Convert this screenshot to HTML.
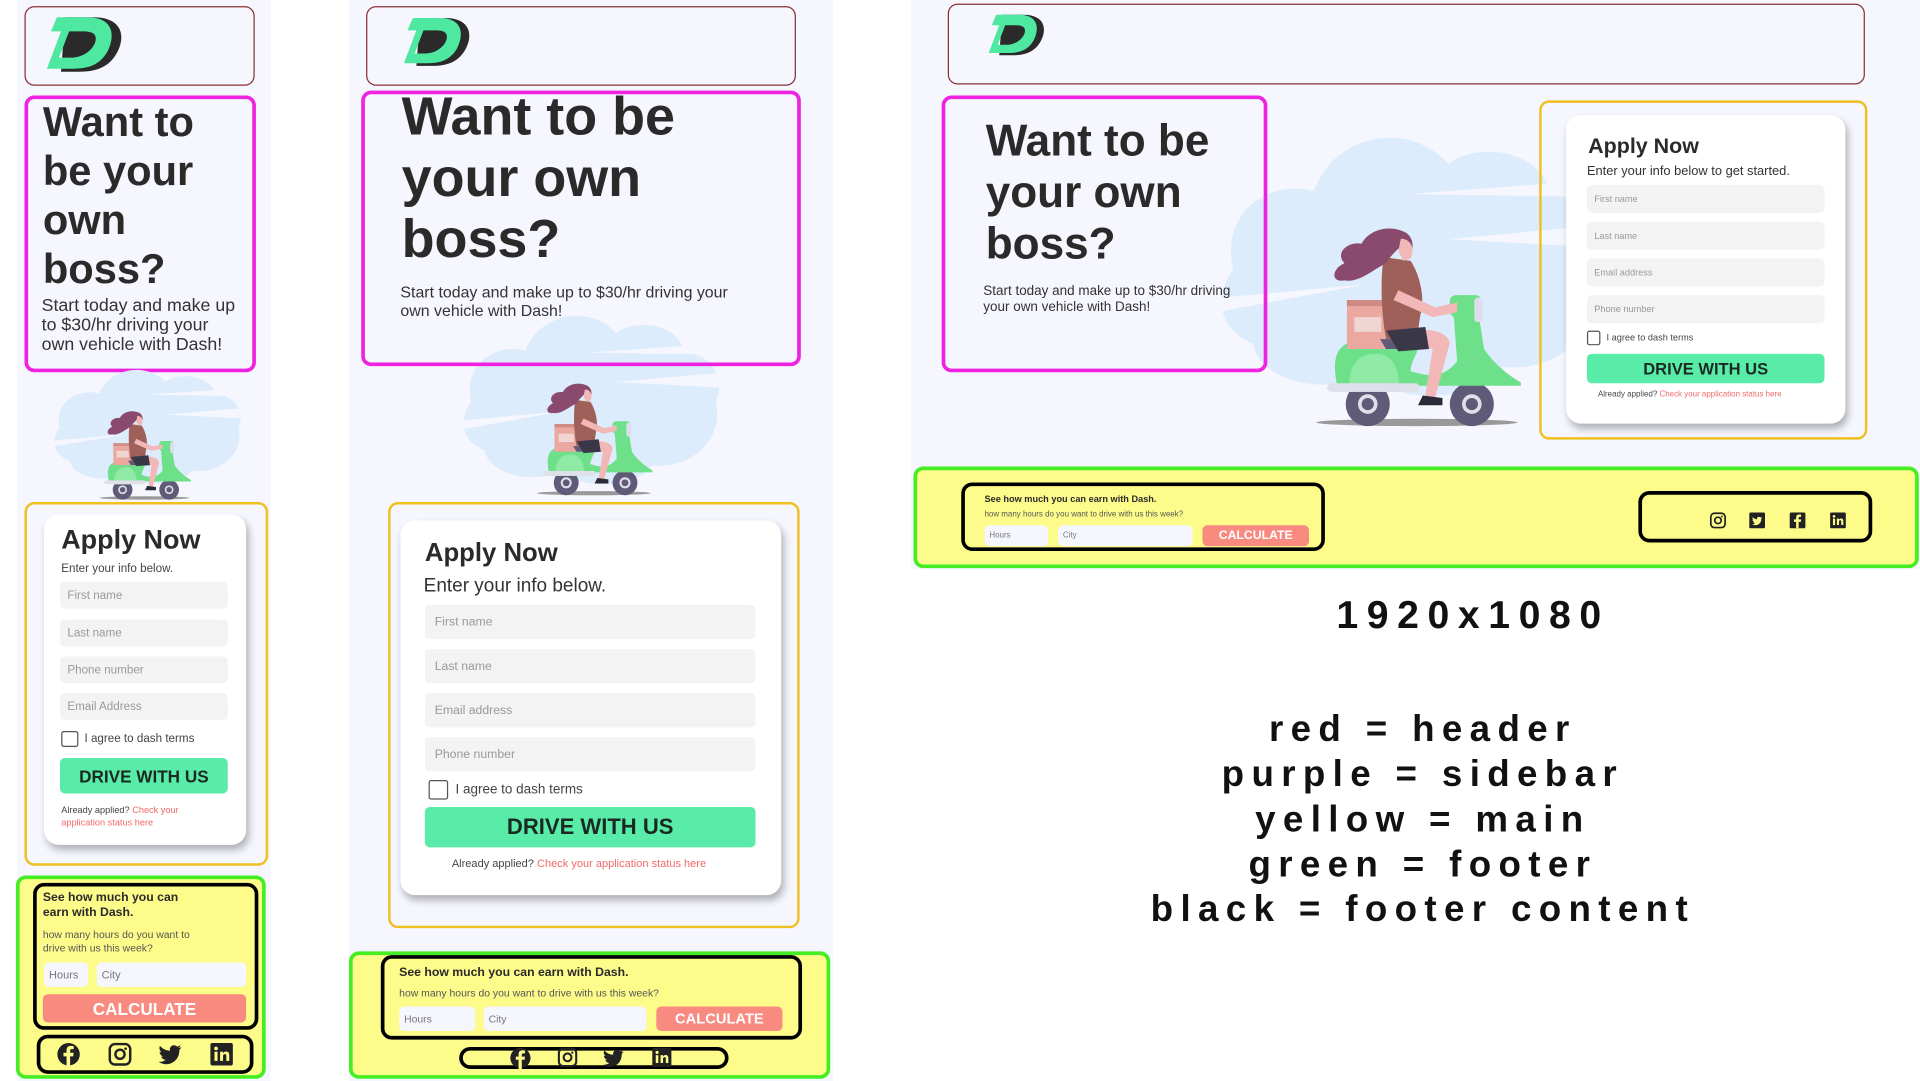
<!DOCTYPE html>
<html><head><meta charset="utf-8"><style>
*{margin:0;padding:0;box-sizing:border-box}
html,body{width:1920px;height:1080px;overflow:hidden;background:#fff;font-family:"Liberation Sans",sans-serif;color:#2a2a2a}
#w{position:absolute;left:0;top:0;width:1568px;height:883px;transform:scale(1.22449);transform-origin:0 0}
.a{position:absolute}
.bg{background:#f5f6fe}
.hd{border:1px solid #8b2f35;border-radius:8px}
.sb{border:3px solid #ee22e0;border-radius:8px}
.mn{border:2px solid #eec020;border-radius:8px}
.ft{border:3px solid #44ee22;border-radius:8px;background:#fdfb8a}
.fc{border:3px solid #000;border-radius:9px}
.card{background:#fff;border-radius:12px;box-shadow:2px 4px 6px rgba(0,0,0,.28)}
.in{position:absolute;background:#f3f3f3;border-radius:4px;color:#999;padding-left:6px;display:flex;align-items:center}
.btn{position:absolute;background:#58eca8;border-radius:4px;display:flex;align-items:center;justify-content:center;font-weight:bold;color:#1a2a22}
.h{font-weight:bold;color:#2a2a2a}
.red{color:#f06a6a}
.cb{position:absolute;border:1.5px solid #555;border-radius:2px;background:#fff}
.fi{position:absolute;background:#f5f6fe;border-radius:4px;color:#777;display:flex;align-items:center;padding-left:4px}
.calc{position:absolute;background:#f98a80;border-radius:4px;color:#fff;font-weight:bold;display:flex;align-items:center;justify-content:center}
.lg{position:absolute;left:0;width:2324px;text-align:center;font-weight:bold;color:#111;letter-spacing:6px;font-size:30px}
</style></head><body>
<svg width="0" height="0" style="position:absolute">
<defs>
<symbol id="logo" viewBox="0 0 80 56">
<path d="M22 2 H50 C78 2 82 20 74 36 C66 52 52 56 36 56 H18 Z" fill="#2a2a2a"/>
<path d="M14 2 H44 C70 2 72 20 64 36 C56 50 44 53 30 53 H4 L18 16 H8 Z M26 16 L16 42 H28 C40 42 50 34 52 26 C54 18 48 16 40 16 Z" fill="#4fe8a0" fill-rule="evenodd"/>
</symbol>
<symbol id="cloud" viewBox="0 0 300 200">
<path d="M20 110 C10 70 50 50 80 58 C95 20 150 10 180 40 C200 25 250 30 255 60 C290 62 300 90 290 110 C300 150 260 180 220 175 C200 200 140 200 120 180 C90 195 40 185 35 160 C10 150 5 130 20 110Z" fill="#dcecfc"/>
<path d="M150 60 L300 50 L300 62 Z M0 130 L120 120 L0 140 Z M180 90 L300 80 L300 96Z" fill="#f5f6fe"/>
</symbol>
<symbol id="scoot" viewBox="0 0 170 165">
<ellipse cx="85" cy="160" rx="82" ry="3" fill="#999"/>
<circle cx="45" cy="145" r="18" fill="#5e5a78"/><circle cx="45" cy="145" r="8" fill="#e0e0ea"/><circle cx="45" cy="145" r="5" fill="#5e5a78"/>
<circle cx="130" cy="145" r="18" fill="#5e5a78"/><circle cx="130" cy="145" r="8" fill="#e0e0ea"/><circle cx="130" cy="145" r="5" fill="#5e5a78"/>
<path d="M20 130 C15 105 20 95 40 92 L85 92 C90 100 80 108 80 118 C100 125 110 120 118 110 L115 70 L135 68 L140 100 C150 115 165 125 175 130 Z" fill="#6ee08a"/>
<path d="M30 135 C28 110 40 104 52 104 C65 104 72 116 70 135Z" fill="#8eeaa4"/>
<rect x="12" y="128" width="75" height="7" rx="3" fill="#e0e0ea"/>
<rect x="112" y="56" width="26" height="18" rx="5" fill="#6ee08a"/>
<rect x="132" y="58" width="7" height="20" rx="3" fill="#dde"/>
<path d="M28 60 h38 v40 h-38z" fill="#eaa8a0"/><path d="M28 60 h38 v5 h-38z" fill="#d08a85"/>
<rect x="34" y="74" width="22" height="12" fill="#f0d6d2"/>
<path d="M55 92 L95 92 L95 100 L60 100 Z" fill="#5e5a78"/>
<path d="M70 90 C90 80 110 85 112 95 L100 140 L92 138 L98 100 C90 98 80 100 72 100Z" fill="#f2b8b8"/>
<path d="M90 138 L106 140 L106 146 L86 146Z" fill="#2a2a38"/>
<path d="M58 25 C55 45 56 70 60 92 L85 92 L88 72 C92 60 88 40 80 28 Z" fill="#a0605a"/>
<path d="M70 52 L100 66 L118 62 L118 70 L98 74 L66 60Z" fill="#f2b8b8"/>
<path d="M60 85 L92 82 L95 100 L70 102Z" fill="#3a3848"/>
<path d="M74 4 C60 -2 45 4 40 14 C28 12 18 22 26 30 C16 34 14 46 26 44 C38 46 48 36 60 30 C62 26 66 22 70 18 L80 22 C84 14 80 6 74 4Z" fill="#8a4a6e"/>
<path d="M72 10 C80 10 84 18 80 26 L74 28 L70 20Z" fill="#f2b8b8"/>
</symbol>
<symbol id="fb" viewBox="0 0 24 24"><circle cx="12" cy="12" r="11" fill="#222"/><path d="M13.5 24 V14 H16.5 L17 10.5 H13.5 V8.5 C13.5 7.5 14 7 15 7 H17 V4 C16 3.9 15 3.8 14 3.8 C11.5 3.8 10 5.3 10 8 V10.5 H7 V14 H10 V24Z" fill="#fdfb8a"/></symbol>
<symbol id="ig" viewBox="0 0 24 24"><rect x="2" y="2" width="20" height="20" rx="5" fill="none" stroke="#222" stroke-width="2.4"/><circle cx="12" cy="12" r="4.5" fill="none" stroke="#222" stroke-width="2.4"/><circle cx="17.5" cy="6.5" r="1.3" fill="#222"/></symbol>
<symbol id="tw" viewBox="0 0 24 24"><path d="M23 5 C22 5.5 21 5.8 20 6 C21 5.3 21.8 4.3 22 3.2 C21 3.8 20 4.2 18.8 4.5 C16.8 2.4 13.2 2.8 12 5.5 C11.5 6.6 11.5 7.6 11.7 8.6 C7.8 8.4 4.3 6.5 2 3.8 C0.8 6 1.6 8.7 3.6 10 C2.8 10 2.2 9.8 1.6 9.5 C1.6 11.8 3.2 13.7 5.3 14.1 C4.6 14.3 3.9 14.3 3.2 14.2 C3.8 16.1 5.6 17.4 7.6 17.4 C5.6 19 3.1 19.7 0.6 19.4 C9.8 25.4 21.3 19.2 21 7.6 C21.9 6.9 22.6 6 23 5Z" fill="#222"/></symbol>
<symbol id="li" viewBox="0 0 24 24"><rect x="1" y="1" width="22" height="22" rx="2" fill="#222"/><rect x="5" y="9.5" width="3" height="9" fill="#fdfb8a"/><circle cx="6.5" cy="6.3" r="1.8" fill="#fdfb8a"/><path d="M10.5 9.5 H13.3 V11 C14 9.8 15.2 9.3 16.5 9.3 C18.7 9.3 19.5 10.8 19.5 13 V18.5 H16.6 V13.6 C16.6 12.5 16.2 11.8 15.2 11.8 C14 11.8 13.4 12.6 13.4 13.8 V18.5 H10.5Z" fill="#fdfb8a"/></symbol>
<symbol id="tws" viewBox="0 0 24 24"><rect x="1" y="1" width="22" height="22" rx="2" fill="#222"/><g transform="translate(4.5 5) scale(.63)"><path d="M23 5 C22 5.5 21 5.8 20 6 C21 5.3 21.8 4.3 22 3.2 C21 3.8 20 4.2 18.8 4.5 C16.8 2.4 13.2 2.8 12 5.5 C11.5 6.6 11.5 7.6 11.7 8.6 C7.8 8.4 4.3 6.5 2 3.8 C0.8 6 1.6 8.7 3.6 10 C2.8 10 2.2 9.8 1.6 9.5 C1.6 11.8 3.2 13.7 5.3 14.1 C4.6 14.3 3.9 14.3 3.2 14.2 C3.8 16.1 5.6 17.4 7.6 17.4 C5.6 19 3.1 19.7 0.6 19.4 C9.8 25.4 21.3 19.2 21 7.6 C21.9 6.9 22.6 6 23 5Z" fill="#fdfb8a"/></g></symbol>
<symbol id="fbs" viewBox="0 0 24 24"><rect x="1" y="1" width="22" height="22" rx="2" fill="#222"/><path d="M13.5 23 V14 H16.5 L17 10.5 H13.5 V8.5 C13.5 7.5 14 7 15 7 H17 V4 C16 3.9 15 3.8 14 3.8 C11.5 3.8 10 5.3 10 8 V10.5 H7 V14 H10 V23Z" fill="#fdfb8a"/></symbol>
</defs></svg>
<div id="w">
<!-- Panel 1 -->
<div class="a bg" style="left:14px;top:0;width:207px;height:883px"></div>
<div class="a hd" style="left:20px;top:5px;width:188px;height:65px"></div>
<svg class="a" style="left:35px;top:12px;width:66px;height:47px"><use href="#logo"/></svg>
<div class="a sb" style="left:20px;top:78px;width:189px;height:226px"></div>
<div class="a h" style="left:35px;top:80px;font-size:34px;line-height:40px;width:170px">Want to<br>be your<br>own<br>boss?</div>
<div class="a" style="left:34px;top:242px;font-size:14.5px;line-height:16px;color:#333">Start today and make up<br>to $30/hr driving your<br>own vehicle with Dash!</div>
<svg class="a" style="left:38px;top:290px;width:162px;height:108px" viewBox="0 0 300 200" preserveAspectRatio="none"><use href="#cloud"/></svg>
<svg class="a" style="left:80px;top:335px;width:76px;height:74px"><use href="#scoot"/></svg>
<div class="a mn" style="left:20px;top:410px;width:199px;height:297px"></div>
<div class="a card" style="left:36px;top:420px;width:165px;height:270px"></div>
<div class="a h" style="left:50px;top:428px;font-size:22px">Apply Now</div>
<div class="a" style="left:50px;top:459px;font-size:9.5px;color:#444">Enter your info below.</div>
<div class="in" style="left:49px;top:475px;width:137px;height:22px;font-size:9.5px">First name</div>
<div class="in" style="left:49px;top:506px;width:137px;height:22px;font-size:9.5px">Last name</div>
<div class="in" style="left:49px;top:536px;width:137px;height:22px;font-size:9.5px">Phone number</div>
<div class="in" style="left:49px;top:566px;width:137px;height:22px;font-size:9.5px">Email Address</div>
<div class="cb" style="left:50px;top:597px;width:14px;height:13px"></div>
<div class="a" style="left:69px;top:598px;font-size:9.5px;color:#444">I agree to dash terms</div>
<div class="btn" style="left:49px;top:619px;width:137px;height:29px;font-size:14px">DRIVE WITH US</div>
<div class="a" style="left:50px;top:657px;font-size:7.5px;line-height:10px;color:#444">Already applied? <span class="red">Check your<br>application status here</span></div>
<div class="a ft" style="left:13px;top:715px;width:204px;height:166px"></div>
<div class="a fc" style="left:27px;top:721px;width:184px;height:120px"></div>
<div class="a h" style="left:35px;top:728px;font-size:10px;line-height:12px">See how much you can<br>earn with Dash.</div>
<div class="a" style="left:35px;top:758px;font-size:8.5px;line-height:11px;color:#555">how many hours do you want to<br>drive with us this week?</div>
<div class="fi" style="left:36px;top:786px;width:36px;height:20px;font-size:9px">Hours</div>
<div class="fi" style="left:79px;top:786px;width:122px;height:20px;font-size:9px">City</div>
<div class="calc" style="left:35px;top:812px;width:166px;height:23px;font-size:14px">CALCULATE</div>
<div class="a fc" style="left:30px;top:845px;width:177px;height:32px"></div>
<svg class="a" style="left:46px;top:851px;width:20px;height:20px"><use href="#fb"/></svg>
<svg class="a" style="left:88px;top:851px;width:20px;height:20px"><use href="#ig"/></svg>
<svg class="a" style="left:129px;top:851px;width:20px;height:20px"><use href="#tw"/></svg>
<svg class="a" style="left:171px;top:851px;width:20px;height:20px"><use href="#li"/></svg>

<!-- Panel 2 -->
<div class="a bg" style="left:285px;top:0;width:395px;height:883px"></div>
<div class="a hd" style="left:299px;top:5px;width:351px;height:65px"></div>
<svg class="a" style="left:327px;top:12px;width:58px;height:43px"><use href="#logo"/></svg>
<svg class="a" style="left:370px;top:240px;width:222px;height:160px" viewBox="0 0 300 200" preserveAspectRatio="none"><use href="#cloud"/></svg>
<div class="a sb" style="left:295px;top:74px;width:359px;height:225px"></div>
<div class="a h" style="left:328px;top:71px;font-size:44px;line-height:50px">Want to be<br>your own<br>boss?</div>
<div class="a" style="left:327px;top:231px;font-size:13px;line-height:15px;color:#333">Start today and make up to $30/hr driving your<br>own vehicle with Dash!</div>
<svg class="a" style="left:437px;top:308px;width:96px;height:102px"><use href="#scoot"/></svg>
<div class="a mn" style="left:317px;top:410px;width:336px;height:348px"></div>
<div class="a card" style="left:327px;top:425px;width:311px;height:306px"></div>
<div class="a h" style="left:347px;top:440px;font-size:21px">Apply Now</div>
<div class="a" style="left:346px;top:470px;font-size:15.5px;color:#333">Enter your info below.</div>
<div class="in" style="left:347px;top:494px;width:270px;height:28px;font-size:10px;padding-left:8px">First name</div>
<div class="in" style="left:347px;top:530px;width:270px;height:28px;font-size:10px;padding-left:8px">Last name</div>
<div class="in" style="left:347px;top:566px;width:270px;height:28px;font-size:10px;padding-left:8px">Email address</div>
<div class="in" style="left:347px;top:602px;width:270px;height:28px;font-size:10px;padding-left:8px">Phone number</div>
<div class="cb" style="left:350px;top:637px;width:16px;height:16px"></div>
<div class="a" style="left:372px;top:639px;font-size:11px;color:#444">I agree to dash terms</div>
<div class="btn" style="left:347px;top:659px;width:270px;height:33px;font-size:18px">DRIVE WITH US</div>
<div class="a" style="left:369px;top:700px;font-size:9px;color:#444">Already applied? <span class="red">Check your application status here</span></div>
<div class="a ft" style="left:285px;top:777px;width:393px;height:104px"></div>
<div class="a fc" style="left:311px;top:780px;width:344px;height:69px"></div>
<div class="a h" style="left:326px;top:789px;font-size:10px">See how much you can earn with Dash.</div>
<div class="a" style="left:326px;top:806px;font-size:8.5px;color:#555">how many hours do you want to drive with us this week?</div>
<div class="fi" style="left:326px;top:822px;width:62px;height:20px;font-size:8.5px">Hours</div>
<div class="fi" style="left:395px;top:822px;width:133px;height:20px;font-size:8.5px">City</div>
<div class="calc" style="left:536px;top:822px;width:103px;height:20px;font-size:12px">CALCULATE</div>
<div class="a fc" style="left:375px;top:855px;width:220px;height:18px"></div>
<svg class="a" style="left:416px;top:855px;width:18px;height:18px"><use href="#fb"/></svg>
<svg class="a" style="left:455px;top:855px;width:17px;height:17px"><use href="#ig"/></svg>
<svg class="a" style="left:492px;top:855px;width:18px;height:18px"><use href="#tw"/></svg>
<svg class="a" style="left:532px;top:855px;width:17px;height:17px"><use href="#li"/></svg>

<!-- Panel 3 -->
<div class="a bg" style="left:744px;top:0;width:824px;height:465px"></div>
<div class="a hd" style="left:774px;top:3px;width:749px;height:66px"></div>
<svg class="a" style="left:805px;top:10px;width:49px;height:36px"><use href="#logo"/></svg>
<svg class="a" style="left:985px;top:85px;width:330px;height:245px" viewBox="0 0 300 200" preserveAspectRatio="none"><use href="#cloud"/></svg>
<div class="a sb" style="left:769px;top:78px;width:266px;height:226px"></div>
<div class="a h" style="left:805px;top:94px;font-size:36px;line-height:42px">Want to be<br>your own<br>boss?</div>
<div class="a" style="left:803px;top:232px;font-size:11px;line-height:12.5px;color:#333">Start today and make up to $30/hr driving<br>your own vehicle with Dash!</div>
<svg class="a" style="left:1072px;top:185px;width:170px;height:165px"><use href="#scoot"/></svg>
<div class="a mn" style="left:1257px;top:82px;width:268px;height:277px"></div>
<div class="a card" style="left:1279px;top:94px;width:228px;height:252px"></div>
<div class="a h" style="left:1297px;top:109px;font-size:17.5px">Apply Now</div>
<div class="a" style="left:1296px;top:134px;font-size:10.5px;color:#333">Enter your info below to get started.</div>
<div class="in" style="left:1296px;top:151px;width:194px;height:23px;font-size:7.5px">First name</div>
<div class="in" style="left:1296px;top:181px;width:194px;height:23px;font-size:7.5px">Last name</div>
<div class="in" style="left:1296px;top:211px;width:194px;height:23px;font-size:7.5px">Email address</div>
<div class="in" style="left:1296px;top:241px;width:194px;height:23px;font-size:7.5px">Phone number</div>
<div class="cb" style="left:1296px;top:270px;width:11px;height:12px"></div>
<div class="a" style="left:1312px;top:271px;font-size:7.5px;color:#444">I agree to dash terms</div>
<div class="btn" style="left:1296px;top:289px;width:194px;height:24px;font-size:13.5px">DRIVE WITH US</div>
<div class="a" style="left:1305px;top:319px;font-size:6.5px;color:#444">Already applied? <span class="red">Check your application status here</span></div>
<div class="a ft" style="left:746px;top:381px;width:821px;height:83px"></div>
<div class="a fc" style="left:785px;top:394px;width:297px;height:56px"></div>
<div class="a h" style="left:804px;top:403px;font-size:7.5px">See how much you can earn with Dash.</div>
<div class="a" style="left:804px;top:417px;font-size:6.5px;color:#555">how many hours do you want to drive with us this week?</div>
<div class="fi" style="left:804px;top:429px;width:52px;height:17px;font-size:6.5px">Hours</div>
<div class="fi" style="left:864px;top:429px;width:110px;height:17px;font-size:6.5px">City</div>
<div class="calc" style="left:982px;top:429px;width:87px;height:17px;font-size:10px">CALCULATE</div>
<div class="a fc" style="left:1338px;top:401px;width:191px;height:42px"></div>
<svg class="a" style="left:1396px;top:418px;width:14px;height:14px"><use href="#ig"/></svg>
<svg class="a" style="left:1428px;top:418px;width:14px;height:14px"><use href="#tws"/></svg>
<svg class="a" style="left:1461px;top:418px;width:14px;height:14px"><use href="#fbs"/></svg>
<svg class="a" style="left:1494px;top:418px;width:14px;height:14px"><use href="#li"/></svg>

<div class="lg" style="top:484px;font-size:32px;letter-spacing:7px;width:2406px">1920x1080</div>
<div class="lg" style="top:579px">red = header</div>
<div class="lg" style="top:616px">purple = sidebar</div>
<div class="lg" style="top:653px">yellow = main</div>
<div class="lg" style="top:690px">green = footer</div>
<div class="lg" style="top:726px">black = footer content</div>
</div>
</body></html>
